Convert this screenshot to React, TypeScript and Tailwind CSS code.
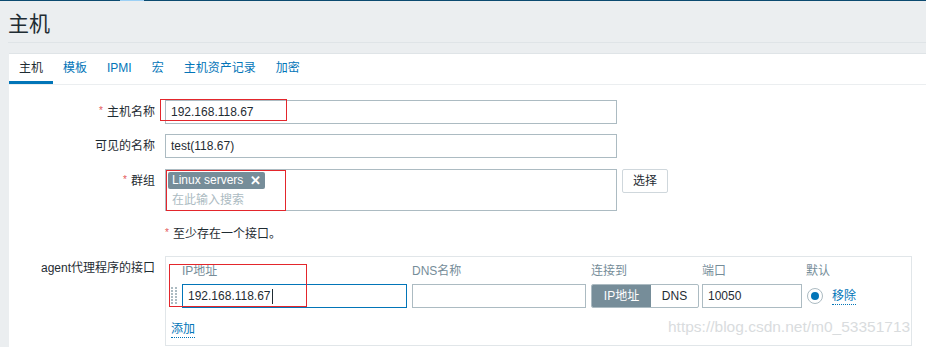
import React from "react";

const font = { fontFamily: '"Liberation Sans", "Noto Sans CJK SC", sans-serif' };

// drag handle: two columns of tiny dots
const DragHandle = () => (
  <svg width="7" height="18" viewBox="0 0 7 18" className="block">
    {[0, 3, 6, 9, 12, 15].map((y) => (
      <g key={y} fill="#acbbc2">
        <rect x="0" y={y} width="2" height="2" />
        <rect x="4" y={y} width="2" height="2" />
      </g>
    ))}
  </svg>
);

const Label = ({ text, required }: { text: string; required?: boolean }) => (
  <div className="w-[156px] shrink-0 pr-[10px] h-[24px] flex items-center justify-end text-[12px] text-[#1f2c33]">
    {required && <span className="text-[#e45959] text-[10px] mr-[4px] -mt-[3px]">*</span>}
    {text}
  </div>
);

const tabs = ["主机", "模板", "IPMI", "宏", "主机资产记录", "加密"];

export default function App() {
  return (
    <div className="relative w-[926px] h-[347px] overflow-hidden bg-[#ebeef0]" style={font}>
      {/* top bar */}
      <div className="h-px bg-[#0b4a70] flex">
        <div className="ml-[120px] w-[24px] bg-[#9cd0f5]" />
      </div>

      {/* page header */}
      <div className="ml-[8px] h-[42px] border-b border-[#dfe4e7] pt-[10px]">
        <h1 className="text-[21px] leading-[26px] text-[#1f2c33]">主机</h1>
      </div>

      {/* panel */}
      <div className="ml-[9px] mt-[10px] bg-white border-t border-[#dfe4e7] h-[300px]">
        <div className="flex border-b border-[#ebeef0]">
          {tabs.map((t, i) => (
            <div
              key={t}
              className={
                "h-[30px] leading-[28px] px-[10px] text-[12px] border-b-[3px] " +
                (i === 0 ? "border-[#0275b8] text-[#1f2c33]" : "border-transparent text-[#0275b8]")
              }
            >
              {t}
            </div>
          ))}
        </div>

        <div className="pt-[15px]">
          {/* host name */}
          <div className="flex">
            <Label text="主机名称" required />
            <div className="w-[452px] h-[24px] border border-[#acbbc2] pl-[5px] flex items-center text-[12px] text-[#1f2c33]">
              192.168.118.67
            </div>
          </div>

          {/* visible name */}
          <div className="flex mt-[10px]">
            <Label text="可见的名称" />
            <div className="w-[452px] h-[24px] border border-[#acbbc2] pl-[5px] flex items-center text-[12px] text-[#1f2c33]">
              test(118.67)
            </div>
          </div>

          {/* groups */}
          <div className="flex mt-[11px]">
            <Label text="群组" required />
            <div className="w-[452px] h-[42px] border border-[#acbbc2] pl-[2px] pt-[2px]">
              <div className="flex w-fit items-center h-[17px] bg-[#768d99] rounded-[2px] pl-[4px] pr-[4px] text-[12px] leading-[17px] text-white">
                Linux servers
                <span className="ml-[7px] font-bold text-[13px] leading-none">✕</span>
              </div>
              <div className="pl-[4px] mt-[3px] text-[12px] leading-[16px] text-[#acbbc2]">在此输入搜索</div>
            </div>
            <div className="ml-[5px] w-[46px] h-[24px] border border-[#cfd7dc] rounded-[2px] flex items-center justify-center text-[12px] text-[#1f2c33]">
              选择
            </div>
          </div>

          {/* note */}
          <div className="flex mt-[13px] h-[20px] items-center">
            <div className="w-[156px] shrink-0" />
            <span className="text-[#e45959] text-[10px] mr-[4px] -mt-[3px]">*</span>
            <span className="text-[12px] text-[#1f2c33]">至少存在一个接口。</span>
          </div>

          {/* interfaces */}
          <div className="flex mt-[12px]">
            <div className="w-[156px] shrink-0 pr-[10px] h-[24px] leading-[24px] text-right text-[12px] text-[#1f2c33]">
              agent代理程序的接口
            </div>
            <div className="w-[747px] h-[90px] border border-[#e1e6e9] pt-[4px] pl-[4px]">
              <div className="flex h-[20px] leading-[20px] text-[12px] text-[#768d99]">
                <div className="w-[12px]" />
                <div className="w-[225px] mr-[5px]">IP地址</div>
                <div className="w-[174px] mr-[5px]">DNS名称</div>
                <div className="w-[108px] mr-[3px]">连接到</div>
                <div className="w-[100px] mr-[4px]">端口</div>
                <div>默认</div>
              </div>
              <div className="flex items-center mt-[3px] h-[24px]">
                <div className="w-[12px] pl-px">
                  <DragHandle />
                </div>
                <div className="w-[225px] h-[24px] mr-[5px] border border-[#0275b8] pl-[5px] flex items-center text-[12px] text-[#1f2c33]">
                  192.168.118.67
                  <span className="w-px h-[15px] bg-[#1f2c33] ml-px" />
                </div>
                <div className="w-[174px] h-[24px] mr-[5px] border border-[#acbbc2]" />
                <div className="w-[108px] h-[24px] mr-[3px] border border-[#acbbc2] rounded-[2px] flex text-[12px] overflow-hidden">
                  <div className="w-[59px] bg-[#768d99] text-white flex items-center justify-center">IP地址</div>
                  <div className="flex-1 flex items-center justify-center text-[#1f2c33]">DNS</div>
                </div>
                <div className="w-[100px] h-[24px] mr-[5px] border border-[#acbbc2] pl-[5px] flex items-center text-[12px] text-[#1f2c33]">
                  10050
                </div>
                <div className="w-[16px] h-[16px] rounded-full border border-[#acbbc2] flex items-center justify-center">
                  <div className="w-[8px] h-[8px] rounded-full bg-[#0275b8]" />
                </div>
                <span className="ml-[9px] text-[12px] leading-[16px] text-[#0275b8] border-b border-dotted border-[#0275b8]">
                  移除
                </span>
              </div>
              <div className="mt-[8px] pl-[1px]">
                <span className="text-[12px] leading-[15px] inline-block text-[#0275b8] border-b border-dotted border-[#0275b8]">
                  添加
                </span>
              </div>
            </div>
          </div>
        </div>
      </div>

      {/* screenshot annotations */}
      <div className="absolute left-[160px] top-[99px] w-[127px] h-[22px] border border-[#e3262c]" />
      <div className="absolute left-[166px] top-[170px] w-[120px] h-[41px] border border-[#e3262c]" />
      <div className="absolute left-[169px] top-[264px] w-[138px] h-[43px] border border-[#e3262c]" />

      {/* watermark */}
      <div className="absolute left-[668px] top-[318px] text-[15.5px] leading-[18px] text-[#d9dcde]">
        https://blog.csdn.net/m0_53351713
      </div>
    </div>
  );
}
